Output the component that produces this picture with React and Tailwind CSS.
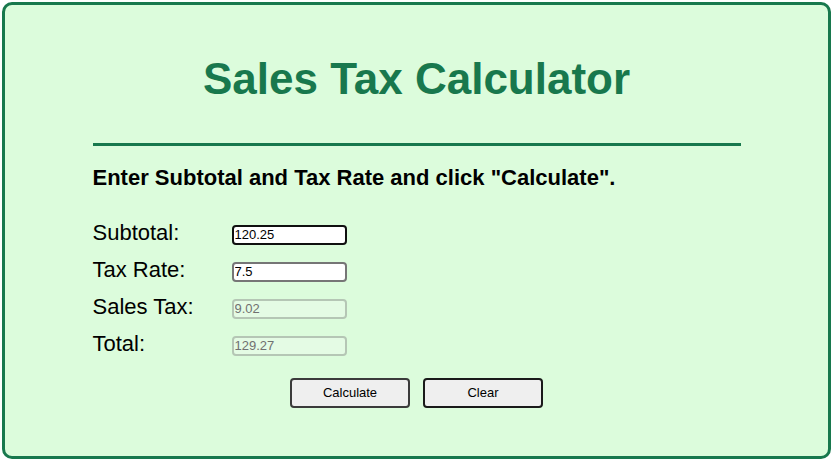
import React, { useState } from 'react';

export default function App() {
  const [subtotal, setSubtotal] = useState('120.25');
  const [rate, setRate] = useState('7.5');
  const [tax, setTax] = useState('9.02');
  const [total, setTotal] = useState('129.27');

  const calculate = () => {
    const s = parseFloat(subtotal);
    const r = parseFloat(rate);
    if (isNaN(s) || isNaN(r)) return;
    const t = (s * r) / 100;
    setTax(t.toFixed(2));
    setTotal((s + t).toFixed(2));
  };

  const clear = () => {
    setSubtotal('');
    setRate('');
    setTax('');
    setTotal('');
  };

  const rows = [
    { label: 'Subtotal:', value: subtotal, set: setSubtotal, focus: true },
    { label: 'Tax Rate:', value: rate, set: setRate },
    { label: 'Sales Tax:', value: tax, disabled: true },
    { label: 'Total:', value: total, disabled: true },
  ];

  return (
    <div className="w-[833px] h-[461px] bg-white p-[2px] font-['Liberation_Sans',Arial,sans-serif]">
      <div className="h-[457px] w-[829px] rounded-[10px] border-[3px] border-[#18784d] bg-[#dcfcdc]">
        <h1 className="pt-[49px] text-center text-[44px] font-bold leading-[50px] text-[#18784d]">
          Sales Tax Calculator
        </h1>

        <div className="mx-auto w-[648px]">
          <div className="mt-[39px] h-[3px] bg-[#18784d]" />
          <h2 className="mt-[19px] text-[22px] font-bold leading-[26px] text-black">
            Enter Subtotal and Tax Rate and click "Calculate".
          </h2>

          <div className="mt-[33px] flex flex-col gap-[16px]">
            {rows.map((row) => (
              <div key={row.label} className="flex items-center h-[21px]">
                <label className="w-[139px] text-[22px] leading-[21px] text-black -mt-[4px]">
                  {row.label}
                </label>
                <input
                  value={row.value}
                  disabled={row.disabled}
                  onChange={(e) => row.set && row.set(e.target.value)}
                  className={`h-[20px] w-[115px] rounded-[4px] border-2 px-[1px] text-[13px] leading-[16px] outline-none ${
                    row.disabled
                      ? 'border-[#b5c6b5] bg-[#e4fbe4] text-[#707070]'
                      : row.focus
                        ? 'border-[#101010] bg-white text-black'
                        : 'border-[#767676] bg-white text-black'
                  }`}
                />
              </div>
            ))}
          </div>

          <div className="mt-[22px] flex justify-center gap-[13px]">
            <button
              onClick={calculate}
              className="h-[30px] w-[120px] rounded-[4px] border-2 border-[#3b3b3b] bg-[#efefef] text-[13px] text-black"
            >
              Calculate
            </button>
            <button
              onClick={clear}
              className="h-[30px] w-[120px] rounded-[4px] border-2 border-[#1a1a1a] bg-[#efefef] text-[13px] text-black"
            >
              Clear
            </button>
          </div>
        </div>
      </div>
    </div>
  );
}
